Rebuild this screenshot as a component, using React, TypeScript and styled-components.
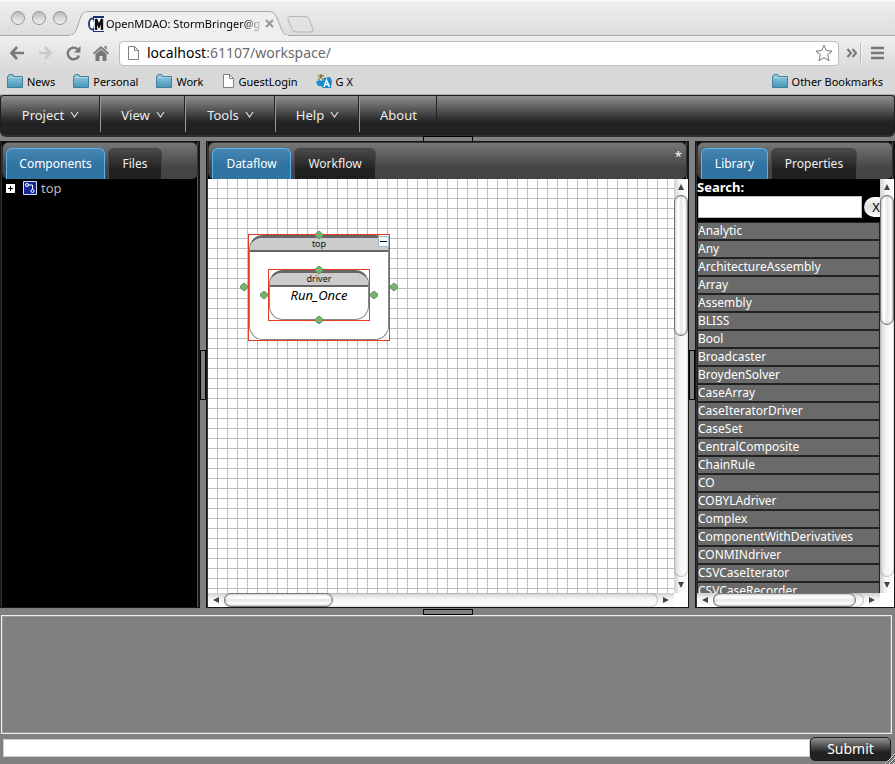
import React from "react";
import styled, { createGlobalStyle, css } from "styled-components";

const GlobalStyle = createGlobalStyle`
  *, *::before, *::after { box-sizing: border-box; }
  body { margin: 0; overflow: hidden; background: #808080; }
  body, button, input { font-family: "Noto Sans", "Open Sans", sans-serif; }
  button, input { margin: 0; padding: 0; border: 0; border-radius: 0; outline: none; }
  a { color: inherit; text-decoration: none; }
  ul { list-style: none; margin: 0; padding: 0; }
`;

const Page = styled.div`
  display: flex;
  flex-direction: column;
  height: 100vh;
  overflow: hidden;
  font-size: 13px;
`;

/* ---------- browser frame ---------- */

const TabStrip = styled.header`
  display: flex;
  align-items: flex-end;
  height: 36px;
  flex: none;
  background: linear-gradient(#efefef, #dcdcdc);
  border-top: 1px solid #f8f8f8;
  box-shadow: inset 0 -1px #a9a9a9;
`;

const WindowButtons = styled.div`
  display: flex;
  gap: 7px;
  padding: 0 0 11px 11px;
`;

const WindowButton = styled.button`
  width: 14px;
  height: 14px;
  border: 1px solid #949494;
  border-radius: 50%;
  background: linear-gradient(#b9b9b9, #dedede 60%, #ececec);
`;

const BrowserTab = styled.div`
  position: relative;
  display: flex;
  align-items: center;
  width: 220px;
  height: 25px;
  margin-left: 2px;
  padding-left: 19px;
  font-size: 11px;
`;

const TabShape = styled.svg`
  position: absolute;
  inset: 0;
`;

const Favicon = styled.svg`
  position: relative;
  margin-right: 2px;
`;

const TabTitle = styled.span`
  position: relative;
  width: 155px;
  white-space: nowrap;
  line-height: 18px;
  color: transparent;
  background: linear-gradient(to right, #000 88%, rgba(0, 0, 0, 0.15));
  background-clip: text;
`;

const TabClose = styled.button`
  position: relative;
  display: flex;
  margin-left: 4px;
  background: none;
`;

const NewTab = styled.button`
  display: flex;
  margin: 0 0 3px -2px;
  background: none;
`;

const Toolbar = styled.div`
  display: flex;
  align-items: center;
  flex: none;
  height: 34px;
  padding: 0 11px 0 9px;
  background: linear-gradient(#f0f0f0, #d9d9d9);
`;

const ToolButton = styled.button<{ $width?: number }>`
  display: flex;
  align-items: center;
  justify-content: flex-start;
  width: ${(p) => p.$width ?? 28}px;
  height: 24px;
  background: none;
`;

const AddressBar = styled.div`
  display: flex;
  align-items: center;
  flex: 1;
  height: 25px;
  padding: 0 5px 0 7px;
  border: 1px solid #bcbcbc;
  border-radius: 4px;
  background: #fff;
`;

const AddressStack = styled.div`
  display: grid;
  flex: 1;
  margin-left: 7px;
  align-items: center;
  font-size: 14px;
  line-height: 20px;
  color: #6a6a6a;

  > * { grid-area: 1 / 1; }
`;

const AddressText = styled.span`
  pointer-events: none;
  b { font-weight: 400; color: #000; }
`;

const AddressInput = styled.input`
  width: 100%;
  background: transparent;
`;

const Divider = styled.span`
  width: 1px;
  height: 20px;
  margin: 0 10px 0 3px;
  background: #b8b8b8;
  box-shadow: 1px 0 #f4f4f4;
`;

const BookmarkBar = styled.nav`
  display: flex;
  align-items: center;
  flex: none;
  height: 25px;
  padding: 0 12px 2px 7px;
  gap: 18px;
  background: #d8d8d8;
  border-bottom: 1px solid #b2b2b2;
  font-size: 11px;
`;

const Bookmark = styled.a<{ $end?: boolean }>`
  display: flex;
  align-items: center;
  gap: 4px;
  color: #000;
  margin-left: ${(p) => (p.$end ? "auto" : "0")};
`;

/* ---------- application ---------- */

const MenuBar = styled.nav`
  display: flex;
  flex: none;
  height: 42px;
  padding-bottom: 3px;
  border: 1px solid #1e1e1e;
  border-bottom: 2px solid #303030;
  border-radius: 4px 4px 6px 6px;
  background: linear-gradient(#8f8f8f, #222 26px);
`;

const MenuItem = styled.button<{ $width: number; $last?: boolean }>`
  display: flex;
  align-items: center;
  justify-content: center;
  gap: 6px;
  width: ${(p) => p.$width}px;
  padding-top: 1px;
  border-right: 1px solid ${(p) => (p.$last ? "transparent" : "#999")};
  box-shadow: inset -1px 0 #222;
  background: none;
  color: #ececec;
  font-size: 13px;
  line-height: 20px;
`;

const Workspace = styled.main`
  display: grid;
  grid-template-columns: 200px 6px minmax(0, 1fr) 6px 200px;
  flex: 1;
  min-height: 0;
`;

const Bar = styled.div<{ $vertical?: boolean; $size?: number }>`
  display: flex;
  flex: none;
  align-items: center;
  justify-content: center;
  background: #808080;
  ${(p) => !p.$vertical && css`height: ${p.$size}px;`}
`;

const Grip = styled.button<{ $vertical?: boolean }>`
  flex: none;
  width: ${(p) => (p.$vertical ? 6 : 50)}px;
  height: ${(p) => (p.$vertical ? 50 : 6)}px;
  border: 1px solid #000;
  background: #808080;
`;

const Panel = styled.section`
  display: flex;
  flex-direction: column;
  min-width: 0;
  min-height: 0;
  border: 1px solid #161616;
  border-right-width: 2px;
  background: #000;
  box-shadow: inset 1px 0 #333, inset -1px 0 #555;
`;

const Tabs = styled.div`
  display: flex;
  align-items: flex-end;
  gap: 3px;
  flex: none;
  height: 37px;
  padding-left: 3px;
  margin-left: 1px;
  border: 1px solid #333;
  border-bottom: 0;
  border-radius: 6px;
  background: linear-gradient(#777, #444 70%);
`;

const Tab = styled.button<{ $active?: boolean; $width: number }>`
  width: ${(p) => p.$width}px;
  height: 31px;
  border: 1px solid #444;
  border-bottom: 0;
  border-radius: 6px 6px 0 0;
  background: linear-gradient(#4a4a4a, #202020 70%);
  color: #eee;
  font-size: 12px;
  line-height: 20px;
  ${(p) =>
    p.$active &&
    css`
      border-color: #55b4f4;
      background: linear-gradient(#4585b2, #3072a0 60%);
      color: #fff;
    `}
`;

const Modified = styled.span`
  margin: 0 4px auto auto;
  padding-top: 4px;
  line-height: 18px;
  color: #fff;
`;

const Tree = styled.ul`
  padding-left: 5px;
`;

const TreeNode = styled.li`
  display: flex;
  align-items: center;
  gap: 8px;
  color: #bbb;
  line-height: 18px;

  span { margin-left: -4px; }
`;

const Expander = styled.button`
  display: flex;
  background: none;
`;

const ScrollArea = styled.div`
  display: grid;
  grid-template-columns: minmax(0, 1fr) 14px;
  grid-template-rows: minmax(0, 1fr) 14px;
  flex: 1;
  min-height: 0;
  margin-left: 1px;
  margin-right: -1px;
  background: #fff;
`;

const Track = styled.div<{ $vertical?: boolean }>`
  display: flex;
  flex-direction: ${(p) => (p.$vertical ? "column" : "row")};
  align-items: stretch;
  overflow: hidden;
  background: linear-gradient(${(p) => (p.$vertical ? "to right" : "to bottom")}, #cfcfcf, #f5f5f5 40%, #fff);
`;

const Well = styled.div<{ $vertical?: boolean }>`
  display: flex;
  flex: 1;
  flex-direction: ${(p) => (p.$vertical ? "column" : "row")};
  border-radius: 7px;
  box-shadow: inset 0 0 2px #777;
`;

const Thumb = styled.div<{ $vertical?: boolean; $share: number }>`
  flex: 0 0 ${(p) => p.$share}%;
  border: 1px solid #777;
  border-radius: 7px;
  background: linear-gradient(${(p) => (p.$vertical ? "to right" : "to bottom")}, #eee, #fff 30%, #e6e6e6 50%, #fff 80%, #ddd);
  box-shadow: inset 0 0 2px #999;
`;

const ArrowButton = styled.button`
  display: flex;
  flex: 0 0 16px;
  align-items: center;
  justify-content: center;
  background: none;
`;

const Canvas = styled.div`
  position: relative;
  overflow: hidden;
  background-color: #fff;
  background-image: linear-gradient(to right, transparent 9px, #bfbfbf 9px),
    linear-gradient(to bottom, transparent 9px, #bfbfbf 9px);
  background-size: 10px 10px;
`;

const Figure = styled.div<{ $x: number; $y: number; $w: number; $h: number }>`
  position: absolute;
  left: ${(p) => p.$x}px;
  top: ${(p) => p.$y}px;
  width: ${(p) => p.$w}px;
  height: ${(p) => p.$h}px;
  border: 1px solid #e83a1c;
  background: #fff;
`;

const FigureBody = styled.div`
  height: 100%;
  border: 1px solid #888;
  border-top: 3px solid #666;
  border-radius: 14px;
  overflow: hidden;
  text-align: center;
`;

const FigureTitle = styled.div`
  height: 14px;
  border-bottom: 2px solid #666;
  background: #ccc;
  color: #111;
  font-size: 9px;
  line-height: 12px;
`;

const FigureContent = styled.div`
  font-size: 13px;
  font-style: italic;
  line-height: 16px;
  color: #000;
`;

const Collapse = styled.button`
  position: absolute;
  top: 1px;
  right: 0;
  display: flex;
  align-items: center;
  justify-content: center;
  width: 11px;
  height: 11px;
  border: 1px solid #9dbdc4;
  background: #f4fcfd;
`;

const Port = styled.svg<{ $x: number; $y: number }>`
  position: absolute;
  left: ${(p) => p.$x}px;
  top: ${(p) => p.$y}px;
`;

const Library = styled.div`
  display: flex;
  flex-direction: column;
  overflow: hidden;
  background: #000;
`;

const Search = styled.form`
  flex: none;
  height: 43px;
  overflow: hidden;
  color: #fff;
`;

const SearchLabel = styled.label`
  display: block;
  font-weight: 700;
  line-height: 17px;
`;

const SearchRow = styled.div`
  display: flex;
  align-items: center;
  gap: 2px;
  padding-left: 1px;
`;

const SearchInput = styled.input`
  flex: none;
  width: 164px;
  height: 22px;
  border: 1px solid #bbb;
  background: #fff;
`;

const ClearButton = styled.button`
  flex: none;
  width: 24px;
  height: 20px;
  border-radius: 10px;
  background: linear-gradient(#fff, #ddd 50%, #fff);
  color: #000;
  font-size: 13px;
`;

const LibraryList = styled.ul`
  flex: 1;
  overflow: hidden;
  padding: 1px 1px 0;
  background: #222;
`;

const LibraryItem = styled.li`
  height: 18px;
  border-bottom: 2px solid #222;
  background: #6a6a6a;
  color: #fff;
  font-size: 12px;
  line-height: 16px;
  white-space: nowrap;
`;

const Console = styled.textarea`
  display: block;
  flex: none;
  height: 119px;
  margin: 0 3px 0 1px;
  border: 1px solid #eee;
  outline: none;
  box-shadow: inset 0 0 0 1px #999;
  background: #808080;
  resize: none;
`;

const CommandForm = styled.form`
  display: flex;
  align-items: center;
  flex: none;
  height: 30px;
  padding: 0 4px 2px 3px;
`;

const CommandInput = styled.input`
  flex: 1;
  min-width: 0;
  height: 18px;
  border: 1px solid #ccc;
  background: #fff;
`;

const Submit = styled.button`
  width: 81px;
  height: 24px;
  margin-top: 2px;
  border: 1px solid #1c1c1c;
  border-radius: 5px;
  background: linear-gradient(#909090, #222 65%);
  color: #fff;
  font-size: 14px;
  line-height: 20px;
`;

const ResizeCorner = styled.svg`
  position: fixed;
  right: 0;
  bottom: 0;
`;

/* ---------- drawings ---------- */

const FolderIcon = () => (
  <svg width="16" height="15" viewBox="0 0 16 15" aria-hidden="true">
    <defs>
      <linearGradient id="folder" x1="0" y1="0" x2="0" y2="1">
        <stop offset="0" stopColor="#9bcbdf" />
        <stop offset="1" stopColor="#4597bb" />
      </linearGradient>
    </defs>
    <path d="M1.5 2.500V1.500Q1.500 .5 2.500 .5H5.500Q6.500 .5 6.500 2.500H15.500V13.500H.5V2.500Z" fill="url(#folder)" stroke="#40809c" />
    <path d="M1 3.500H15" stroke="#a9d6e6" />
  </svg>
);

const PageIcon = () => (
  <svg width="13" height="16" viewBox="0 0 13 16" aria-hidden="true">
    <path d="M1.500 1.500H7.500L11.500 5.500V14.500H1.500Z" fill="#fff" stroke="#808080" />
    <path d="M7.500 1.500V5.500H11.500" fill="none" stroke="#808080" />
  </svg>
);

const TranslateIcon = () => (
  <svg width="16" height="16" viewBox="0 0 16 16" aria-hidden="true">
    <path d="M1 1H9V9H1Z" fill="#ddd5b4" />
    <path d="M2 3H8M5 1V4L2 7M4 4L8 7" stroke="#665d45" fill="none" />
    <path d="M0 9L3 7 6 8 8 5 14 4 16 8 15 15 7 15 5 13 2 13Z" fill="#168bd2" />
    <path d="M8 14L10.500 7 13.500 14M9 11.500H12.500" stroke="#fff" strokeWidth="1.500" fill="none" />
  </svg>
);

const Chevron = () => (
  <svg width="9" height="7" viewBox="0 0 9 7" aria-hidden="true">
    <path d="M1 1L4.500 6L8 1" fill="none" stroke="#ddd" strokeWidth="1.200" />
  </svg>
);

const arrowShapes = {
  up: "M4 1L7 7H1Z",
  down: "M1 1H7L4 7Z",
  left: "M7 1V7L1 4Z",
  right: "M1 1L7 4L1 7Z",
};

function Arrow({ to }: { to: keyof typeof arrowShapes }) {
  return (
    <ArrowButton aria-label={`Scroll ${to}`}>
      <svg width="8" height="8" viewBox="0 0 8 8"><path d={arrowShapes[to]} fill="#444" /></svg>
    </ArrowButton>
  );
}

function Scrollbar({ vertical, share }: { vertical?: boolean; share: number }) {
  return (
    <Track $vertical={vertical}>
      <Arrow to={vertical ? "up" : "left"} />
      <Well $vertical={vertical}><Thumb $vertical={vertical} $share={share} /></Well>
      <Arrow to={vertical ? "down" : "right"} />
    </Track>
  );
}

const Diamond = ({ x, y }: { x: number; y: number }) => (
  <Port $x={x} $y={y} width="8" height="8" viewBox="0 0 8 8">
    <path d="M3 .5H5L7.500 3V5L5 7.500H3L.5 5V3Z" fill="#79b06f" stroke="#5f9b58" strokeLinejoin="round" />
  </Port>
);

/* ---------- data ---------- */

const menus = [
  { name: "Project", width: 100 },
  { name: "View", width: 85 },
  { name: "Tools", width: 90 },
  { name: "Help", width: 84 },
];

const ports = [
  { x: 107, y: 52 },
  { x: 32, y: 104 },
  { x: 182, y: 104 },
  { x: 107, y: 87 },
  { x: 52, y: 112 },
  { x: 162, y: 112 },
  { x: 107, y: 137 },
];

const libraryItems = [
  "Analytic", "Any", "ArchitectureAssembly", "Array", "Assembly", "BLISS", "Bool",
  "Broadcaster", "BroydenSolver", "CaseArray", "CaseIteratorDriver", "CaseSet",
  "CentralComposite", "ChainRule", "CO", "COBYLAdriver", "Complex",
  "ComponentWithDerivatives", "CONMINdriver", "CSVCaseIterator", "CSVCaseRecorder",
];

export default function App() {
  return (
    <Page>
      <GlobalStyle />
      <TabStrip>
        <WindowButtons>
          <WindowButton aria-label="Close window" />
          <WindowButton aria-label="Minimize window" />
          <WindowButton aria-label="Zoom window" />
        </WindowButtons>
        <BrowserTab>
          <TabShape width="220" height="25" viewBox="0 0 220 25" aria-hidden="true">
            <path d="M0 24.500C5 24 6 22 8 17L12 5Q14 .5 19 .5H200Q205 .5 207 5L212 17C214 22 215 24 220 24.500V25H0Z" fill="#efefef" stroke="#aaa" />
            <path d="M1 25H219" stroke="#efefef" strokeWidth="2" />
          </TabShape>
          <Favicon width="16" height="16" viewBox="0 0 16 16" aria-hidden="true">
            <rect x="5" width="11" height="16" fill="#1c2f79" />
            <ellipse cx="4" cy="8" rx="3" ry="5.500" fill="#fff" stroke="#293d87" strokeWidth="2" />
            <rect x="6" y="2" width="10" height="13" fill="#fff" />
            <path d="M8 14V3L11 10L14 3V14" fill="none" stroke="#111" strokeWidth="2.400" />
          </Favicon>
          <TabTitle>OpenMDAO: StormBringer@g</TabTitle>
          <TabClose aria-label="Close tab">
            <svg width="9" height="9" viewBox="0 0 9 9"><path d="M1 1L8 8M8 1L1 8" stroke="#999" strokeWidth="2.200" /></svg>
          </TabClose>
        </BrowserTab>
        <NewTab aria-label="New tab">
          <svg width="28" height="17" viewBox="0 0 28 17">
            <path d="M1 4Q0 .5 3 .5H18Q21 .5 22 3L26 13Q27 16 24 16H9Q6 16 5 13Z" fill="#e2e2e2" stroke="#b5b5b5" />
          </svg>
        </NewTab>
      </TabStrip>
      <Toolbar>
        <ToolButton aria-label="Back">
          <svg width="16" height="16" viewBox="0 0 16 16"><path d="M8 2L2.500 8L8 14M3 8H15" fill="none" stroke="#777" strokeWidth="2.600" /></svg>
        </ToolButton>
        <ToolButton aria-label="Forward">
          <svg width="16" height="16" viewBox="0 0 16 16"><path d="M8 2L13.500 8L8 14M13 8H2" fill="none" stroke="#c9c9c9" strokeWidth="2.600" /></svg>
        </ToolButton>
        <ToolButton aria-label="Reload">
          <svg width="17" height="17" viewBox="0 0 17 17"><path d="M12.500 4.200A5.800 5.800 0 1 0 14 10.500" fill="none" stroke="#777" strokeWidth="2.400" /><path d="M15.500 1V7.500H9Z" fill="#777" /></svg>
        </ToolButton>
        <ToolButton aria-label="Home" $width={26}>
          <svg width="16" height="16" viewBox="0 0 16 16"><path d="M8 1L16 8L15 9.500L8 3.500L1 9.500L0 8Z" fill="#777" /><path d="M2.500 9L8 4.500L13.500 9V16H9.500V11H6.500V16H2.500Z" fill="#777" /><path d="M11.500 1H13.500V5L11.500 3Z" fill="#777" /></svg>
        </ToolButton>
        <AddressBar>
          <PageIcon />
          <AddressStack>
            <AddressInput aria-label="Address" />
            <AddressText><b>localhost</b>:61107/workspace/</AddressText>
          </AddressStack>
          <svg width="18" height="18" viewBox="0 0 18 18" aria-label="Bookmark">
            <path d="M9 1.200L11.300 6.500L17 7.100L12.700 10.900L14 16.700L9 13.700L4 16.700L5.300 10.900L1 7.100L6.700 6.500Z" fill="#fff" stroke="#777" strokeLinejoin="round" />
          </svg>
        </AddressBar>
        <ToolButton aria-label="More extensions" $width={18}>
          <svg width="18" height="10" viewBox="0 0 18 10"><path d="M8.500 1L12 5L8.500 9M13.500 1L17 5L13.500 9" fill="none" stroke="#777" strokeWidth="2" /></svg>
        </ToolButton>
        <Divider />
        <ToolButton aria-label="Browser menu" $width={13}>
          <svg width="13" height="14" viewBox="0 0 13 14"><path d="M0 2H13M0 7H13M0 12H13" stroke="#777" strokeWidth="2.600" /></svg>
        </ToolButton>
      </Toolbar>
      <BookmarkBar>
        {["News", "Personal", "Work"].map((name) => (
          <Bookmark href="#" key={name}><FolderIcon />{name}</Bookmark>
        ))}
        <Bookmark href="#"><PageIcon />GuestLogin</Bookmark>
        <Bookmark href="#"><TranslateIcon />G X</Bookmark>
        <Bookmark href="#" $end><FolderIcon />Other Bookmarks</Bookmark>
      </BookmarkBar>

      <MenuBar>
        {menus.map((menu) => (
          <MenuItem key={menu.name} $width={menu.width}>{menu.name}<Chevron /></MenuItem>
        ))}
        <MenuItem $width={78} $last>About</MenuItem>
      </MenuBar>
      <Bar $size={4}><Grip aria-label="Toggle menu bar" /></Bar>

      <Workspace>
        <Panel>
          <Tabs role="tablist">
            <Tab role="tab" aria-selected $active $width={99}>Components</Tab>
            <Tab role="tab" $width={54}>Files</Tab>
          </Tabs>
          <Tree>
            <TreeNode>
              <Expander aria-label="Expand top">
                <svg width="9" height="9" viewBox="0 0 9 9"><path d="M0 0H9V9H0Z" fill="#fff" /><path d="M2 4.500H7M4.500 2V7" stroke="#000" /></svg>
              </Expander>
              <svg width="14" height="14" viewBox="0 0 14 14" aria-hidden="true">
                <path d="M.5 .5H13.500V13.500H.5Z" fill="#15289b" stroke="#d4daff" />
                <path d="M4 4H9.500V9" fill="none" stroke="#fff" />
                <circle cx="4" cy="4" r="1.500" fill="#15289b" stroke="#fff" />
                <circle cx="9.500" cy="10" r="1.500" fill="#15289b" stroke="#fff" />
              </svg>
              <span>top</span>
            </TreeNode>
          </Tree>
        </Panel>
        <Bar $vertical><Grip $vertical aria-label="Toggle left panel" /></Bar>
        <Panel>
          <Tabs role="tablist">
            <Tab role="tab" aria-selected $active $width={79}>Dataflow</Tab>
            <Tab role="tab" $width={82}>Workflow</Tab>
            <Modified>*</Modified>
          </Tabs>
          <ScrollArea>
            <Canvas>
              <Figure $x={40} $y={55} $w={142} $h={107}>
                <FigureBody><FigureTitle>top</FigureTitle></FigureBody>
                <Collapse aria-label="Collapse top">
                  <svg width="7" height="1" viewBox="0 0 7 1"><path d="M0 0H7V1H0Z" fill="#000" /></svg>
                </Collapse>
              </Figure>
              <Figure $x={60} $y={90} $w={102} $h={52}>
                <FigureBody>
                  <FigureTitle>driver</FigureTitle>
                  <FigureContent>Run_Once</FigureContent>
                </FigureBody>
              </Figure>
              {ports.map((port) => <Diamond key={`${port.x}-${port.y}`} x={port.x} y={port.y} />)}
            </Canvas>
            <Scrollbar vertical share={37} />
            <Scrollbar share={25} />
          </ScrollArea>
        </Panel>
        <Bar $vertical><Grip $vertical aria-label="Toggle right panel" /></Bar>
        <Panel>
          <Tabs role="tablist">
            <Tab role="tab" aria-selected $active $width={67}>Library</Tab>
            <Tab role="tab" $width={86}>Properties</Tab>
          </Tabs>
          <ScrollArea>
            <Library>
              <Search onSubmit={(e) => e.preventDefault()}>
                <SearchLabel htmlFor="library-search">Search:</SearchLabel>
                <SearchRow>
                  <SearchInput id="library-search" />
                  <ClearButton type="reset">X</ClearButton>
                </SearchRow>
              </Search>
              <LibraryList>
                {libraryItems.map((name) => <LibraryItem key={name}>{name}</LibraryItem>)}
              </LibraryList>
            </Library>
            <Scrollbar vertical share={34} />
            <Scrollbar share={95} />
          </ScrollArea>
        </Panel>
      </Workspace>

      <Bar $size={7}><Grip aria-label="Toggle console" /></Bar>
      <Console aria-label="Console output" readOnly />
      <CommandForm onSubmit={(e) => e.preventDefault()}>
        <CommandInput aria-label="Command" />
        <Submit type="submit">Submit</Submit>
      </CommandForm>
      <ResizeCorner width="11" height="11" viewBox="0 0 11 11" aria-hidden="true">
        <path d="M1 11L11 1M5 11L11 5M9 11L11 9" stroke="#ddd" />
        <path d="M2 11L11 2M6 11L11 6" stroke="#555" />
      </ResizeCorner>
    </Page>
  );
}
